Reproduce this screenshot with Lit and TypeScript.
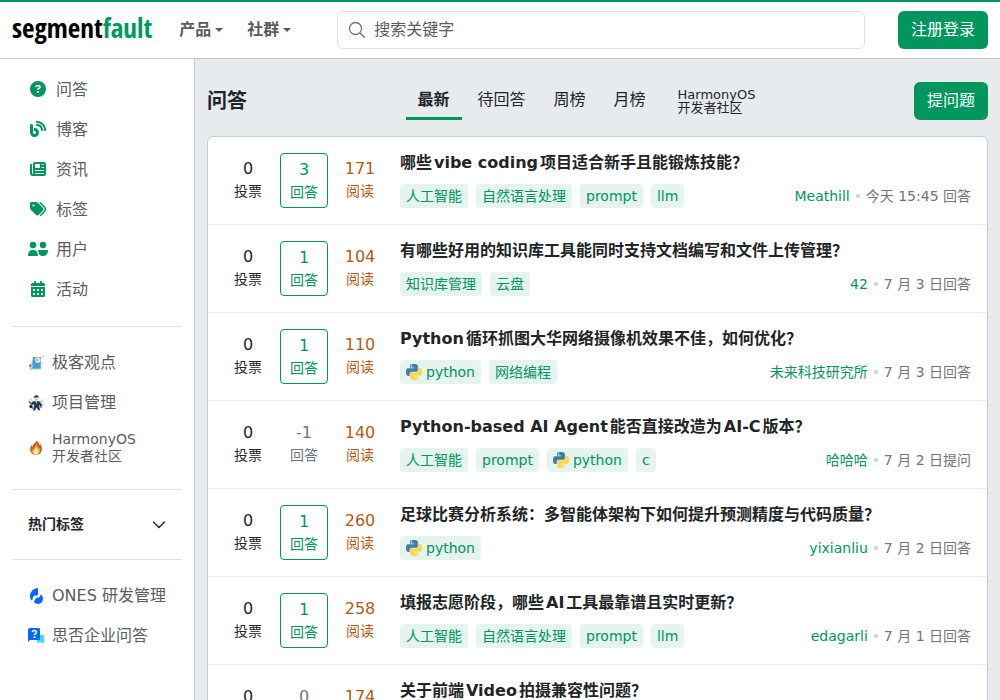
import { LitElement, html, css } from "lit";
import { customElement, state } from "lit/decorators.js";
import { classMap } from "lit/directives/class-map.js";

const base = css`
  *,
  *::before,
  *::after {
    box-sizing: border-box;
  }
  a {
    color: inherit;
    text-decoration: none;
  }
  button,
  input {
    font: inherit;
    color: inherit;
    margin: 0;
  }
  button {
    border: 0;
    background: none;
    padding: 0;
    cursor: pointer;
  }
  ul {
    list-style: none;
    margin: 0;
    padding: 0;
  }
  svg {
    display: block;
    flex: none;
  }
  .btn {
    height: 38px;
    padding: 0 13px;
    border-radius: 6px;
    background: #00965e;
    color: #fff;
    white-space: nowrap;
  }
`;

const fa = (w: number, d: string, width = 16) =>
  html`<svg width=${width} height="16" viewBox="0 0 ${w} 512" fill="currentColor" aria-hidden="true"><path d=${d} /></svg>`;

const icons = {
  question: fa(512, "M256 512A256 256 0 1 0 256 0a256 256 0 1 0 0 512zM169.8 165.3c7.9-22.3 29.1-37.3 52.8-37.3h58.3c34.9 0 63.1 28.3 63.1 63.1c0 22.6-12.1 43.5-31.7 54.8L280 264.4c-.2 13-10.9 23.6-24 23.6c-13.3 0-24-10.7-24-24V250.5c0-8.6 4.6-16.5 12.1-20.8l44.3-25.4c4.7-2.7 7.6-7.7 7.6-13.1c0-8.4-6.8-15.1-15.1-15.1H222.6c-3.4 0-6.4 2.1-7.5 5.3l-.4 1.2c-4.4 12.5-18.2 19-30.6 14.6s-19-18.2-14.6-30.6l.4-1.2zM224 352a32 32 0 1 1 64 0 32 32 0 1 1 -64 0z"),
  blog: fa(512, "M192 32c0 17.7 14.3 32 32 32c123.7 0 224 100.3 224 224c0 17.7 14.3 32 32 32s32-14.3 32-32C512 128.9 383.1 0 224 0c-17.7 0-32 14.3-32 32zm0 96c0 17.7 14.3 32 32 32c70.7 0 128 57.3 128 128c0 17.7 14.3 32 32 32s32-14.3 32-32c0-106-86-192-192-192c-17.7 0-32 14.3-32 32zM96 144c0-26.5-21.5-48-48-48S0 117.5 0 144V368c0 79.5 64.5 144 144 144s144-64.5 144-144s-64.5-144-144-144H128v96h16c26.5 0 48 21.5 48 48s-21.5 48-48 48s-48-21.5-48-48V144z"),
  news: fa(512, "M96 96c0-35.3 28.7-64 64-64H448c35.3 0 64 28.7 64 64V416c0 35.3-28.7 64-64 64H80c-44.2 0-80-35.8-80-80V128c0-17.7 14.3-32 32-32s32 14.3 32 32V400c0 8.8 7.2 16 16 16s16-7.2 16-16V96zm64 24v80c0 13.3 10.7 24 24 24H296c13.3 0 24-10.7 24-24V120c0-13.3-10.7-24-24-24H184c-13.3 0-24 10.7-24 24zm208-8c0 8.8 7.2 16 16 16h48c8.8 0 16-7.2 16-16s-7.2-16-16-16H384c-8.8 0-16 7.2-16 16zm0 96c0 8.8 7.2 16 16 16h48c8.8 0 16-7.2 16-16s-7.2-16-16-16H384c-8.8 0-16 7.2-16 16zM160 304c0 8.8 7.2 16 16 16H432c8.8 0 16-7.2 16-16s-7.2-16-16-16H176c-8.8 0-16 7.2-16 16zm0 96c0 8.8 7.2 16 16 16H432c8.8 0 16-7.2 16-16s-7.2-16-16-16H176c-8.8 0-16 7.2-16 16z"),
  tags: fa(512, "M345 39.1L472.8 168.4c52.4 53 52.4 138.2 0 191.2L360.8 472.9c-9.3 9.4-24.5 9.5-33.9 .2s-9.5-24.5-.2-33.9L438.6 325.9c33.9-34.3 33.9-89.4 0-123.7L310.9 72.9c-9.3-9.4-9.2-24.6 .2-33.9s24.6-9.2 33.9 .2zM0 229.5V80C0 53.5 21.5 32 48 32H197.5c17 0 33.3 6.7 45.3 18.7l168 168c25 25 25 65.5 0 90.5L277.3 442.7c-25 25-65.5 25-90.5 0l-168-168C6.7 262.7 0 246.5 0 229.5zM144 144a32 32 0 1 0 -64 0 32 32 0 1 0 64 0z"),
  users: html`<svg width="20" height="16" viewBox="0 0 20 16" fill="currentColor" aria-hidden="true">
    <circle cx="5" cy="4" r="3.2" />
    <circle cx="15" cy="4" r="3.2" />
    <path d="M0 14.300C0 11.200 2.100 9 4.400 9h1.200c2.300 0 4.400 2.200 4.400 5.300 0 .3-.2.700-.6.700H.7c-.4 0-.7-.4-.7-.7z" />
    <path d="M10.600 9h8.900c.3 0 .5.200.5.500 0 3.200-2 5.500-4.400 5.500h-1.200c-1.600 0-2.900-.9-3.500-2.300-.1-1.200-.4-2.100-.9-2.900-.2-.4.200-.8.600-.8z" />
  </svg>`,
  calendar: fa(448, "M128 0c17.700 0 32 14.300 32 32V64H288V32c0-17.700 14.300-32 32-32s32 14.300 32 32V64h48c26.500 0 48 21.500 48 48v48H0V112C0 85.500 21.500 64 48 64H96V32c0-17.700 14.300-32 32-32zM0 192H448V464c0 26.500-21.500 48-48 48H48c-26.500 0-48-21.500-48-48V192zm64 80v32c0 8.800 7.200 16 16 16h32c8.800 0 16-7.200 16-16V272c0-8.800-7.200-16-16-16H80c-8.800 0-16 7.200-16 16zm128 0v32c0 8.800 7.200 16 16 16h32c8.800 0 16-7.200 16-16V272c0-8.800-7.200-16-16-16H208c-8.800 0-16 7.200-16 16zm144-16c-8.800 0-16 7.200-16 16v32c0 8.800 7.200 16 16 16h32c8.800 0 16-7.200 16-16V272c0-8.800-7.200-16-16-16H336zM64 400v32c0 8.800 7.200 16 16 16h32c8.800 0 16-7.200 16-16V400c0-8.800-7.200-16-16-16H80c-8.800 0-16 7.200-16 16zm144-16c-8.800 0-16 7.200-16 16v32c0 8.800 7.200 16 16 16h32c8.800 0 16-7.200 16-16V400c0-8.800-7.200-16-16-16H208zm112 16v32c0 8.800 7.200 16 16 16h32c8.800 0 16-7.200 16-16V400c0-8.800-7.200-16-16-16H336c-8.800 0-16 7.200-16 16z", 14),
  geek: html`<svg width="16" height="16" viewBox="0 0 16 16" aria-hidden="true">
    <path d="M1.200 9.200 4 8v7l-2 .5-.6-2z" fill="#c9ced2" />
    <path d="M1 10.200l1.800-.6.4 1.400-1.600 1z" fill="#59636b" />
    <path d="M4.800 2h8v11.500l-8.400.6z" fill="#4d9ad0" />
    <path d="M3.700 6 5 5v9l-1.300.4z" fill="#8cb9d9" />
    <path d="M6.500 4.500 8 2.500h3.500l1.300 2.700-1.500 2.600H8z" fill="#dce9ef" />
    <circle cx="9" cy="5" r=".8" fill="#69808e" />
    <path d="M5 13.300h7.800v1H5z" fill="#4ac7c5" />
    <circle cx="4" cy="2.500" r=".7" fill="#f4c659" />
    <circle cx="14.500" cy="1.500" r=".7" fill="#f4a259" />
    <circle cx="14.300" cy="8" r=".8" fill="#f4c659" />
    <circle cx="3.300" cy="15" r=".7" fill="#e4d8d0" />
  </svg>`,
  manager: html`<svg width="16" height="16" viewBox="0 0 16 16" aria-hidden="true">
    <path d="M11 5.500 15 4l.5 8L12 14z" fill="#d5dde2" />
    <path d="M.8 4 3.500 2.800 5 6.500 2 8z" fill="#dbe3e7" />
    <path d="M1.300 6 4 8.500 3 10 .5 7z" fill="#2d6f9b" />
    <path d="M4.700 6.500 8 5.800l3.500.8 2.800 3.600-1.400 1.300-1.800-1.600.2 2.500 1 2.900h-2L8.500 12.500 7 15.500H5l1-4-.2-2.300-1.600.8L2.800 9z" fill="#263b4b" />
    <path d="M7.500 6h1.400l-.6 3z" fill="#fff" />
    <circle cx="8.300" cy="3.500" r="2.100" fill="#edc9ad" />
    <path d="M5.900 3C6 .9 7.300.2 8.700.3c1.500.1 2.200 1.300 1.900 2.700L9.500 2.100 7 2.600z" fill="#20292f" />
    <circle cx="3" cy="11.500" r="1.700" fill="#17242d" />
    <circle cx="4.700" cy="13" r="1" fill="#3e91c4" />
    <circle cx="12.500" cy="12" r="1.100" fill="#3e91c4" />
  </svg>`,
  fire: html`<svg width="16" height="16" viewBox="0 0 16 16" aria-hidden="true">
    <path d="M8.300.8c2.200 1 3 2.600 3.200 4.500.6-.4.8-1 .8-1.600C13.600 5.500 14 7.500 13.900 9.300c0 3.400-2.400 5.500-5.800 5.500S2.200 12.700 2.200 9.500c0-2 .6-3.500 1.700-4.700 0 .9.200 1.500.6 1.900C5 4.700 5.600 3.600 7.200 2.700 8 2.200 8.400 1.500 8.300.8z" fill="#bd6223" />
    <path d="M8.600 3.500c1 1.800 1 3 2.400 5 .6-.3.900-.8 1-1.300.9 3.300.1 6.800-3.900 7.200-3.300 0-4.900-2.400-4.300-5.700.4.600.8.900 1.300 1C6 7.500 8.300 6.300 8.600 3.500z" fill="#f2a53b" />
    <path d="M8.200 7c.3 1.500 1.900 2.400 2.200 4.200.2 1.900-.8 3.200-2.300 3.200s-2.700-1.200-2.400-3C5.900 9.600 7.800 9 8.200 7z" fill="#fff0a0" />
  </svg>`,
  ones: html`<svg width="16" height="16" viewBox="0 0 16 16" aria-hidden="true">
    <path d="M10 0v6.400L8.200 8 7 7.200 4.700 9.500v2L3.400 12.600C2.500 11.500 2 9.900 2 8 2 3.700 5.500.4 10 0z" fill="#0a66ff" />
    <path d="M7.200 11.300 9.300 9l1 1 2.200-2.300V6.200c1.600.7 2.500 2.300 2.500 4.300 0 3.200-2.200 5.500-5 5.500-1.500 0-2.900-.6-3.700-1.700-.4-.5.200-2.100.9-3z" fill="#0a66ff" />
  </svg>`,
  enterprise: html`<svg width="16" height="16" viewBox="0 0 16 16" aria-hidden="true">
    <path d="M9 7h5.500c1 0 1.500.5 1.500 1.500V16l-2-1.500H9z" fill="#3ddcff" />
    <path d="M2 0h8.500c1 0 1.500.6 1.500 1.500v9c0 1-.5 1.500-1.500 1.500H2L0 14V2C0 .8.800 0 2 0z" fill="#0a66ff" />
    <path d="M4.300 4.200c.2-1.100 1-1.700 2-1.700 1.200 0 2.100.7 2.100 1.800 0 1.300-1.900 1.500-1.900 2.900" fill="none" stroke="#fff" stroke-width="1.500" />
    <circle cx="6.500" cy="9.300" r="1" fill="#fff" />
  </svg>`,
  chevron: html`<svg width="14" height="14" viewBox="0 0 14 14" fill="none" aria-hidden="true">
    <path d="M1.500 4 7 9.500 12.500 4" stroke="currentColor" stroke-width="1.400" stroke-linecap="round" stroke-linejoin="round" />
  </svg>`,
  search: html`<svg width="18" height="18" viewBox="0 0 18 18" fill="none" aria-hidden="true">
    <circle cx="7.500" cy="7.500" r="6" stroke="currentColor" stroke-width="1.300" />
    <path d="m12 12 4.800 4.800" stroke="currentColor" stroke-width="1.500" />
  </svg>`,
  python: html`<svg width="16" height="16" viewBox="0 0 24 24" aria-hidden="true">
    <path fill="#3f7cac" d="M14.25.18l.9.2.73.26.59.3.45.32.34.34.25.34.16.33.1.3.04.26.02.2-.01.13V8.5l-.05.63-.13.55-.21.46-.26.38-.3.31-.33.25-.35.19-.35.14-.33.1-.3.07-.26.04-.21.02H8.77l-.69.05-.59.14-.5.22-.41.27-.33.32-.27.35-.2.36-.15.37-.1.35-.07.32-.04.27-.02.21v3.06H3.17l-.21-.03-.28-.07-.32-.12-.35-.18-.36-.26-.36-.36-.35-.46-.32-.59-.28-.73-.21-.88-.14-1.05-.05-1.23.06-1.22.16-1.04.24-.87.32-.71.36-.57.4-.44.42-.33.42-.24.4-.16.36-.1.32-.05.24-.01h.16l.06.01h8.16v-.83H6.18l-.01-2.75-.02-.37.05-.34.11-.31.17-.28.25-.26.31-.23.38-.2.44-.18.51-.15.58-.12.64-.1.71-.06.77-.04.84-.02 1.27.05zm-6.3 1.98l-.23.33-.08.41.08.41.23.34.33.22.41.09.41-.09.33-.22.23-.34.08-.41-.08-.41-.23-.33-.33-.22-.41-.09-.41.09z" />
    <path fill="#ffd74a" d="M21.04 6.11l.28.06.32.12.35.18.36.27.36.35.35.47.32.59.28.73.21.88.14 1.04.05 1.23-.06 1.23-.16 1.04-.24.86-.32.71-.36.57-.4.45-.42.33-.42.24-.4.16-.36.09-.32.05-.24.02-.16-.01h-8.22v.82h5.84l.01 2.76.02.36-.05.34-.11.31-.17.29-.25.25-.31.24-.38.2-.44.17-.51.15-.58.13-.64.09-.71.07-.77.04-.84.01-1.27-.04-1.07-.14-.9-.2-.73-.25-.59-.3-.45-.33-.34-.34-.25-.34-.16-.33-.1-.3-.04-.25-.02-.2.01-.13v-5.34l.05-.64.13-.54.21-.46.26-.38.3-.32.33-.24.35-.2.35-.14.33-.1.3-.06.26-.04.21-.02.13-.01h5.84l.69-.05.59-.14.5-.21.41-.28.33-.32.27-.35.2-.36.15-.36.1-.35.07-.32.04-.28.02-.21V6.07h2.09l.14.01zm-6.47 14.25l-.23.33-.08.41.08.41.23.33.33.23.41.08.41-.08.33-.23.23-.33.08-.41-.08-.41-.23-.33-.33-.23-.41-.08-.41.08z" />
  </svg>`,
};

interface Question {
  votes: number;
  answers: number;
  views: number;
  title: string;
  tags: string[];
  author: string;
  when: string;
}

const questions: Question[] = [
  { votes: 0, answers: 3, views: 171, title: "哪些vibe coding项目适合新手且能锻炼技能？", tags: ["人工智能", "自然语言处理", "prompt", "llm"], author: "Meathill", when: "今天 15:45 回答" },
  { votes: 0, answers: 1, views: 104, title: "有哪些好用的知识库工具能同时支持文档编写和文件上传管理？", tags: ["知识库管理", "云盘"], author: "42", when: "7 月 3 日回答" },
  { votes: 0, answers: 1, views: 110, title: "Python循环抓图大华网络摄像机效果不佳，如何优化？", tags: ["python", "网络编程"], author: "未来科技研究所", when: "7 月 3 日回答" },
  { votes: 0, answers: -1, views: 140, title: "Python-based AI Agent能否直接改造为AI-C版本？", tags: ["人工智能", "prompt", "python", "c"], author: "哈哈哈", when: "7 月 2 日提问" },
  { votes: 0, answers: 1, views: 260, title: "足球比赛分析系统：多智能体架构下如何提升预测精度与代码质量？", tags: ["python"], author: "yixianliu", when: "7 月 2 日回答" },
  { votes: 0, answers: 1, views: 258, title: "填报志愿阶段，哪些AI工具最靠谱且实时更新？", tags: ["人工智能", "自然语言处理", "prompt", "llm"], author: "edagarli", when: "7 月 1 日回答" },
  { votes: 0, answers: 0, views: 174, title: "关于前端Video拍摄兼容性问题？", tags: [], author: "", when: "" },
];

@customElement("sf-header")
class SfHeader extends LitElement {
  static styles = [
    base,
    css`
      :host {
        display: block;
      }
      .bar {
        display: flex;
        align-items: center;
        height: 58px;
        padding: 0 12px;
        border-top: 2px solid #00965e;
        background: #fff;
      }
      .logo {
        padding-bottom: 4px;
        font: 700 27px/32px "Liberation Sans Narrow", "Open Sans Condensed", "Noto Sans CJK SC", sans-serif;
        color: #000;
      }
      .accent {
        color: #009a61;
      }
      .nav {
        display: flex;
        gap: 24px;
        margin-left: 27px;
      }
      .drop {
        display: flex;
        align-items: center;
        gap: 4px;
        font-weight: 700;
        color: #595c5f;
        white-space: nowrap;
      }
      .drop::after {
        content: "";
        border: 4px solid transparent;
        border-top-color: currentColor;
        border-bottom: 0;
      }
      .search {
        flex: 1;
        display: flex;
        align-items: center;
        gap: 8px;
        height: 38px;
        margin: 0 33px 0 46px;
        padding: 0 10px;
        border: 1px solid #dee2e6;
        border-radius: 6px;
        color: #6c757d;
      }
      .field {
        flex: 1;
        min-width: 0;
        height: 34px;
        margin-bottom: 2px;
        padding: 0;
        border: 0;
        outline: 0;
        background: none;
        color: #212529;
      }
      .field::placeholder {
        color: #595c5f;
        opacity: 1;
      }
    `,
  ];
  render() {
    return html`<header class="bar">
      <a class="logo" href="#">segment<span class="accent">fault</span></a>
      <nav class="nav">
        <button class="drop" type="button">产品</button>
        <button class="drop" type="button">社群</button>
      </nav>
      <label class="search">
        ${icons.search}
        <input class="field" type="text" placeholder="搜索关键字" aria-label="搜索关键字" />
      </label>
      <button class="btn" type="button">注册登录</button>
    </header>`;
  }
}

@customElement("sf-sidebar")
class SfSidebar extends LitElement {
  static styles = [
    base,
    css`
      :host {
        display: block;
        padding: 12px;
        border-right: 1px solid #c9cdd0;
        background: #fff;
        color: #595c5f;
      }
      .item {
        display: flex;
        align-items: center;
        gap: 8px;
        padding: 8px 16px;
        line-height: 24px;
      }
      .icon {
        display: flex;
        justify-content: center;
        width: 20px;
        padding-bottom: 2px;
        color: #00965e;
      }
      .icon.small {
        width: 16px;
        padding-bottom: 0;
      }
      .stacked {
        font-size: 14px;
        line-height: 17px;
      }
      .rule {
        height: 1px;
        margin: 16px 0;
        border: 0;
        background: #dee2e6;
      }
      .toggle {
        display: flex;
        align-items: center;
        justify-content: space-between;
        width: 100%;
        padding: 8px 16px;
        font-size: 14px;
        font-weight: 700;
        line-height: 21px;
        color: #212529;
      }
    `,
  ];
  private item(icon: unknown, text: unknown, small = false, stacked = false) {
    return html`<li>
      <a class=${classMap({ item: true, stacked })} href="#">
        <span class=${classMap({ icon: true, small })}>${icon}</span>
        <span>${text}</span>
      </a>
    </li>`;
  }
  render() {
    return html`<nav>
      <ul>
        ${this.item(icons.question, "问答")} ${this.item(icons.blog, "博客")} ${this.item(icons.news, "资讯")}
        ${this.item(icons.tags, "标签")} ${this.item(icons.users, "用户")} ${this.item(icons.calendar, "活动")}
      </ul>
      <hr class="rule" />
      <ul>
        ${this.item(icons.geek, "极客观点", true)} ${this.item(icons.manager, "项目管理", true)}
        ${this.item(icons.fire, html`HarmonyOS<br />开发者社区`, true, true)}
      </ul>
      <hr class="rule" />
      <button class="toggle" type="button" aria-expanded="false">热门标签 ${icons.chevron}</button>
      <hr class="rule" />
      <ul>
        ${this.item(icons.ones, "ONES 研发管理", true)} ${this.item(icons.enterprise, "思否企业问答", true)}
      </ul>
    </nav>`;
  }
}

@customElement("sf-questions")
class SfQuestions extends LitElement {
  @state() private active = 0;

  static styles = [
    base,
    css`
      :host {
        display: block;
        padding: 24px 12px;
      }
      .head {
        display: flex;
        align-items: center;
        justify-content: space-between;
        margin-bottom: 16px;
      }
      .heading {
        margin: 0;
        font-size: 20px;
        font-weight: 700;
        line-height: 24px;
      }
      .tabs {
        display: flex;
        gap: 4px;
      }
      .tab {
        height: 38px;
        padding: 0 12px;
        border-top: 1px solid transparent;
        border-bottom: 3px solid transparent;
        white-space: nowrap;
      }
      .tab.active {
        font-weight: 700;
        border-bottom-color: #00965e;
      }
      .extra {
        align-self: center;
        margin-left: 16px;
        font-size: 13px;
        line-height: 13px;
      }
      .card {
        border: 1px solid #c9cdd0;
        border-radius: 6px;
        background: #fff;
      }
      .row {
        display: flex;
        align-items: flex-start;
        gap: 16px;
        padding: 16px;
      }
      .row + .row {
        border-top: 1px solid #ebecee;
      }
      .stats {
        display: flex;
        align-items: flex-start;
        gap: 8px;
      }
      .stat {
        width: 48px;
        padding: 4px 0;
        text-align: center;
        line-height: 24px;
      }
      .boxed {
        border: 1px solid #00965e;
        border-radius: 4px;
        color: #00965e;
      }
      .muted {
        color: #6c757d;
      }
      .views {
        color: #b35a13;
      }
      .label {
        display: block;
        font-size: 14px;
        line-height: 21px;
      }
      .body {
        flex: 1;
        min-width: 0;
        display: flex;
        flex-direction: column;
        gap: 12px;
      }
      .title {
        margin: 0;
        font-size: 16px;
        font-weight: 700;
        line-height: 19px;
        text-autospace: normal;
      }
      .meta {
        display: flex;
        align-items: center;
        justify-content: space-between;
        font-size: 14px;
        line-height: 24px;
      }
      .tags {
        display: flex;
        gap: 8px;
      }
      .tag {
        display: flex;
        align-items: center;
        gap: 4px;
        padding: 0 6px;
        border-radius: 4px;
        background: #e5f4ee;
        color: #00965e;
      }
      .by {
        display: flex;
        align-items: center;
        gap: 6px;
        color: #6c757d;
        white-space: nowrap;
      }
      .author {
        color: #00965e;
      }
      .dot {
        width: 4px;
        height: 4px;
        border-radius: 50%;
        background: #cfd2d4;
      }
    `,
  ];
  private row(q: Question) {
    const answered = q.answers > 0;
    return html`<li class="row">
      <div class="stats">
        <div class="stat">${q.votes}<span class="label">投票</span></div>
        <div class=${classMap({ stat: true, boxed: answered, muted: !answered })}>
          ${q.answers}<span class="label">回答</span>
        </div>
        <div class="stat views">${q.views}<span class="label">阅读</span></div>
      </div>
      <div class="body">
        <h2 class="title"><a href="#">${q.title}</a></h2>
        ${q.author
          ? html`<div class="meta">
              <div class="tags">
                ${q.tags.map((t) => html`<a class="tag" href="#">${t === "python" ? icons.python : ""}${t}</a>`)}
              </div>
              <div class="by"><a class="author" href="#">${q.author}</a><span class="dot"></span><span>${q.when}</span></div>
            </div>`
          : ""}
      </div>
    </li>`;
  }
  render() {
    return html`<div class="head">
        <h1 class="heading">问答</h1>
        <nav class="tabs">
          ${["最新", "待回答", "周榜", "月榜"].map(
            (t, i) =>
              html`<button type="button" class=${classMap({ tab: true, active: i === this.active })} @click=${() => (this.active = i)}>
                ${t}
              </button>`
          )}
          <a class="extra" href="#">HarmonyOS<br />开发者社区</a>
        </nav>
        <button class="btn" type="button">提问题</button>
      </div>
      <ul class="card">
        ${questions.map((q) => this.row(q))}
      </ul>`;
  }
}

@customElement("app-root")
class AppRoot extends LitElement {
  static styles = [
    base,
    css`
      :host {
        display: flex;
        flex-direction: column;
        min-height: 100vh;
        font: 16px/24px "DejaVu Sans", "Noto Sans CJK SC", sans-serif;
        color: #212529;
        background: #e7ebee;
      }
      .top {
        position: sticky;
        top: 0;
        z-index: 1;
        flex: none;
        box-shadow: 0 1px 0 #c4c7ca;
      }
      .layout {
        flex: 1;
        display: grid;
        grid-template-columns: 195px minmax(0, 1fr);
      }
    `,
  ];
  render() {
    return html`<sf-header class="top"></sf-header>
      <div class="layout">
        <sf-sidebar></sf-sidebar>
        <main><sf-questions></sf-questions></main>
      </div>`;
  }
}
